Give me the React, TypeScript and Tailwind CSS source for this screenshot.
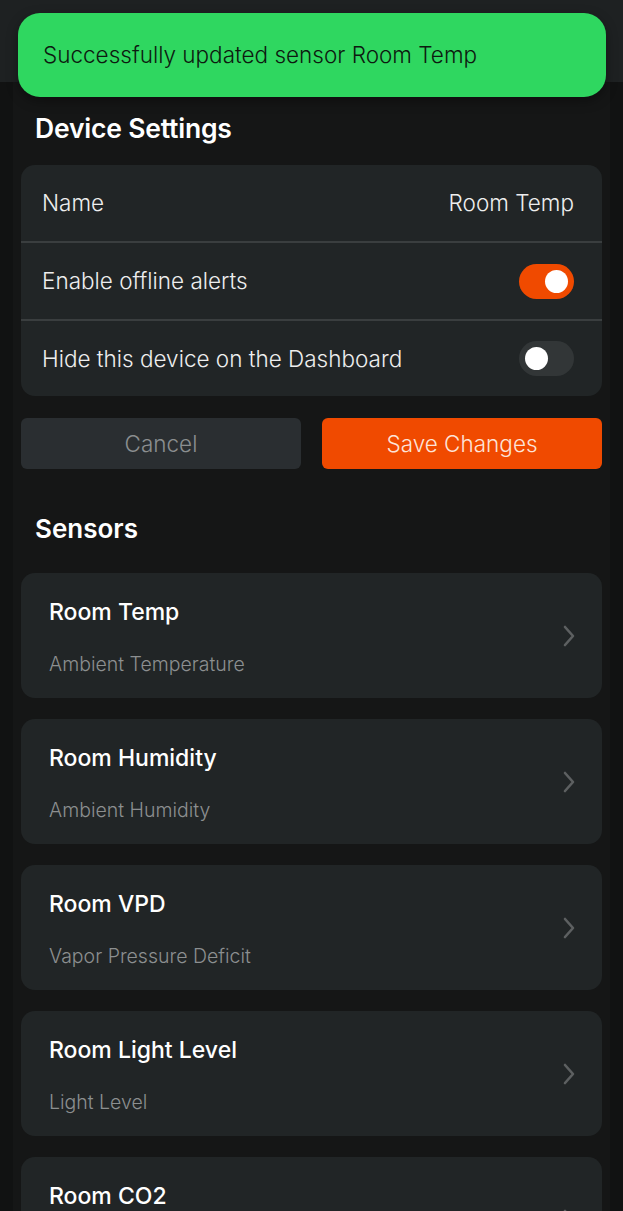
import React from "react";

const sensors = [
  { name: "Room Temp", type: "Ambient Temperature" },
  { name: "Room Humidity", type: "Ambient Humidity" },
  { name: "Room VPD", type: "Vapor Pressure Deficit" },
  { name: "Room Light Level", type: "Light Level" },
  { name: "Room CO2", type: "CO2" },
];

function Toggle({ on }: { on: boolean }) {
  return (
    <div
      className={`w-[55px] h-[35px] rounded-full flex items-center px-[6px] ${
        on ? "bg-[#f04a00] justify-end" : "bg-[#323637] justify-start"
      }`}
    >
      <div className="w-[23px] h-[23px] rounded-full bg-white" />
    </div>
  );
}

function Chevron() {
  return (
    <svg width="14" height="22" viewBox="0 0 14 22" fill="none">
      <path d="M3 2 L11 11 L3 20" stroke="#5d6061" strokeWidth="2.6" strokeLinecap="round" strokeLinejoin="round" />
    </svg>
  );
}

export default function App() {
  return (
    <div
      className="w-[623px] h-[1211px] overflow-hidden bg-[#111212] relative"
      style={{ fontFamily: "Inter, 'Noto Sans', sans-serif" }}
    >
      <div className="h-[82px] bg-[#1e2122]" />
      <div className="mx-[13px] bg-[#151616] min-h-[1129px] px-[8px] pt-[30px]">
        <h2 className="text-white font-semibold text-[26.5px] leading-[32px] pl-[14px] tracking-[-0.2px]">Device Settings</h2>
        <div className="mt-[21px] bg-[#212526] rounded-[14px] overflow-hidden">
          <div className="h-[76px] flex items-center justify-between px-[21px] pr-[28px] text-[22.5px] text-[#eeeeee] font-light">
            <span>Name</span>
            <span>Room Temp</span>
          </div>
          <div className="h-[2px] bg-[#3a3e3f]" />
          <div className="h-[76px] flex items-center justify-between px-[21px] pr-[28px] text-[22.5px] text-[#eeeeee] font-light">
            <span>Enable offline alerts</span>
            <Toggle on={true} />
          </div>
          <div className="h-[2px] bg-[#3a3e3f]" />
          <div className="h-[75px] flex items-center justify-between px-[21px] pr-[28px] text-[22.5px] text-[#eeeeee] font-light">
            <span>Hide this device on the Dashboard</span>
            <Toggle on={false} />
          </div>
        </div>
        <div className="mt-[22px] flex gap-[21px]">
          <button className="flex-1 h-[51px] rounded-[6px] bg-[#2a2e31] text-[#8b8e90] text-[22.5px] font-light">Cancel</button>
          <button className="flex-1 h-[51px] rounded-[6px] bg-[#f04a00] text-[#fde3d8] text-[22.5px] font-light">Save Changes</button>
        </div>
        <h2 className="mt-[44px] text-white font-semibold text-[26px] leading-[32px] pl-[14px]">Sensors</h2>
        <div className="mt-[28px] flex flex-col gap-[21px]">
          {sensors.map((s) => (
            <div key={s.name} className="h-[125px] bg-[#212526] rounded-[14px] flex items-center justify-between pl-[28px] pr-[26px]">
              <div className="flex flex-col pt-[2px]">
                <span className="text-white text-[23px] font-medium leading-[28px]">{s.name}</span>
                <span className="mt-[26px] text-[#8c8f90] text-[19.5px] leading-[24px] font-light">{s.type}</span>
              </div>
              <Chevron />
            </div>
          ))}
        </div>
      </div>
      <div className="absolute left-[18px] top-[13px] w-[588px] h-[84px] rounded-[22px] bg-[#2fd760] flex items-center pl-[25px] shadow-[0_4px_12px_rgba(0,0,0,0.35)]">
        <span className="text-[#0d1a10] text-[22.5px] font-light">Successfully updated sensor Room Temp</span>
      </div>
    </div>
  );
}
